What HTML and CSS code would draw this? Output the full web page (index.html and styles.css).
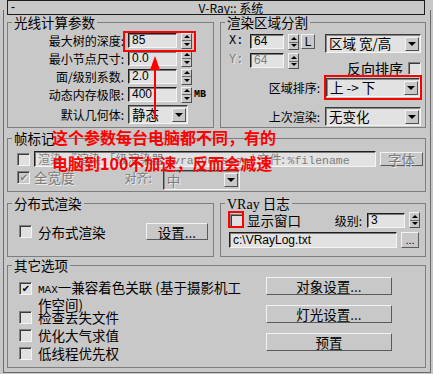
FILE: index.html
```html
<!DOCTYPE html>
<html lang="zh-CN">
<head>
    <meta charset="UTF-8">
    <meta name="viewport" content="width=device-width, initial-scale=1.0">
    <title>V-Ray:: 系统</title>
    <link rel="stylesheet" href="styles.css">
</head>
<body>
<div class="rollout">
    <div class="rollout-title">
        <span class="collapse">-</span>
        <span class="rollout-name">V-Ray:: 系统</span>
    </div>

    <div class="group-row top-row">
        <div class="group raycast">
            <div class="group-title">光线计算参数</div>
            <div class="param">
                <span class="param-label">最大树的深度:</span>
                <span class="field num">85</span>
                <span class="spin"><i class="up"></i><i class="down"></i></span>
            </div>
            <div class="param">
                <span class="param-label">最小节点尺寸:</span>
                <span class="field num">0.0</span>
                <span class="spin"><i class="up"></i><i class="down"></i></span>
            </div>
            <div class="param">
                <span class="param-label">面/级别系数.</span>
                <span class="field num">2.0</span>
                <span class="spin"><i class="up"></i><i class="down"></i></span>
            </div>
            <div class="param">
                <span class="param-label">动态内存极限:</span>
                <span class="field num">400</span>
                <span class="spin"><i class="up"></i><i class="down"></i></span>
                <span class="unit">MB</span>
            </div>
            <div class="param geom-row">
                <span class="param-label">默认几何体:</span>
                <span class="select geom">静态<span class="drop"></span></span>
            </div>
        </div>

        <div class="group regions">
            <div class="group-title">渲染区域分割</div>
            <div class="xy-row">
                <span class="axis">X:</span>
                <span class="field short">64</span>
                <span class="spin"><i class="up"></i><i class="down"></i></span>
                <span class="btn lock">L</span>
                <span class="select region-mode">区域 宽/高<span class="drop"></span></span>
            </div>
            <div class="xy-row">
                <span class="axis off">Y:</span>
                <span class="field short off">64</span>
                <span class="spin"><i class="up"></i><i class="down"></i></span>
                <label class="reverse">反向排序<span class="check"></span></label>
            </div>
            <div class="pick-row order-row">
                <span class="pick-label">区域排序:</span>
                <span class="select order">上 -&gt; 下<span class="drop"></span></span>
            </div>
            <div class="pick-row last-row">
                <span class="pick-label">上次渲染:</span>
                <span class="select last">无变化<span class="drop"></span></span>
            </div>
        </div>
    </div>

    <div class="group stamp">
        <div class="group-title">帧标记</div>
        <div class="stamp-row">
            <span class="check"></span>
            <span class="field stamp-text">渲染 『渲染 「级渲染器 <span class="mono">%vrayversion</span> | 文件: <span class="mono">%filename</span></span>
            <span class="btn off font-btn">字体</span>
        </div>
        <div class="stamp-row second">
            <span class="check checked off"></span>
            <span class="off wide-label">全宽度</span>
            <span class="off align-label">对齐:</span>
            <span class="select align off">中<span class="drop"></span></span>
        </div>
    </div>

    <div class="group-row mid-row">
        <div class="group distributed">
            <div class="group-title">分布式渲染</div>
            <div class="dist-row">
                <span class="check"></span>
                <span class="check-text">分布式渲染</span>
                <span class="btn setup">设置...</span>
            </div>
        </div>

        <div class="group log">
            <div class="group-title"><span class="serif">VRay</span> 日志</div>
            <div class="log-row">
                <span class="check"></span>
                <span class="check-text">显示窗口</span>
                <span class="level-label">级别:</span>
                <span class="field level">3</span>
                <span class="spin"><i class="up"></i><i class="down"></i></span>
            </div>
            <div class="log-row path-row">
                <span class="field path">c:\VRayLog.txt</span>
                <span class="btn browse">...</span>
            </div>
        </div>
    </div>

    <div class="group misc">
        <div class="group-title">其它选项</div>
        <div class="misc-options">
            <div class="option two-line">
                <span class="check checked"></span>
                <span class="check-text"><span class="mono max">MAX</span>一兼容着色关联 (基于摄影机工<br>作空间)</span>
            </div>
            <div class="option">
                <span class="check"></span>
                <span class="check-text">检查丢失文件</span>
            </div>
            <div class="option">
                <span class="check"></span>
                <span class="check-text">优化大气求值</span>
            </div>
            <div class="option">
                <span class="check"></span>
                <span class="check-text">低线程优先权</span>
            </div>
        </div>
        <div class="misc-buttons">
            <span class="btn wide">对象设置...</span>
            <span class="btn wide">灯光设置...</span>
            <span class="btn wide">预置</span>
        </div>
    </div>
</div>

<!-- red notes drawn over the dialog -->
<div class="mark mark-depth"></div>
<div class="mark mark-order"></div>
<div class="mark mark-log"></div>
<svg class="arrow" width="14" height="66" viewBox="0 0 14 66">
    <polygon points="7,1 12,15 2,15" fill="#ff0000"/>
    <rect x="6" y="14" width="2" height="50" fill="#ff0000"/>
</svg>
<div class="note note-one">这个参数每台电脑都不同，有的</div>
<div class="note note-two">电脑到100不加速，反而会减速</div>
</body>
</html>
```

FILE: styles.css
```css
* {
    box-sizing: border-box;
}
body {
    margin: 0;
    width: 433px;
    height: 374px;
    overflow: hidden;
    position: relative;
    background-color: #c8c8c8;
    font-family: "Noto Sans CJK SC", "Liberation Sans", sans-serif;
    font-size: 12px;
    color: #000;
}
.rollout {
    display: flow-root;
    margin: 10px 0 0 3px;
    width: 428px;
    height: 363px;
    border: 1px solid #6a6a6a;
    border-top: none;
    padding: 0 4px 0 3px;
}
.rollout-title {
    margin-top: -10px;
    width: 418px;
    height: 15px;
    border: 1px solid #1c1c1c;
    display: flex;
    align-items: center;
    overflow: hidden;
}
.collapse {
    width: 20px;
    padding-left: 3px;
    font-family: "Liberation Sans", sans-serif;
    font-size: 12px;
    line-height: 13px;
}
.rollout-name {
    flex: 1;
    text-align: center;
    padding-left: 10px;
    font-size: 12px;
    line-height: 13px;
}

/* group boxes */
.group {
    position: relative;
    border: 1px solid #7e7e7e;
}
.group-title {
    position: absolute;
    top: -8px;
    left: 4px;
    padding: 0 2px;
    background-color: #c8c8c8;
    font-size: 13.5px;
    line-height: 14px;
}
.group-row {
    display: flex;
    gap: 6px;
}
.top-row {
    margin-top: 7px;
}
.raycast {
    width: 207px;
    height: 106px;
    padding-top: 10px;
}
.regions {
    width: 206px;
    height: 106px;
    padding: 11px 4px 0 8px;
}

/* common controls */
.field {
    display: block;
    height: 15px;
    border: 1px solid;
    border-color: #1e1e1e #f4f4f4 #f4f4f4 #1e1e1e;
    box-shadow: inset 1px 1px 0 #7a7a7a;
    background-color: #e2e2e2;
    padding-left: 3px;
    font-family: "Liberation Sans", sans-serif;
    font-size: 12px;
    line-height: 13px;
    white-space: nowrap;
    overflow: hidden;
}
.spin {
    display: flex;
    flex-direction: column;
    width: 11px;
    height: 16px;
    border: 1px solid;
    border-color: #f2f2f2 #505050 #505050 #f2f2f2;
    background-color: #c8c8c8;
}
.spin i {
    flex: 1;
    display: flex;
    align-items: center;
    justify-content: center;
}
.spin .up {
    border-bottom: 1px solid #6a6a6a;
}
.spin .up::after {
    content: "";
    border-left: 3px solid transparent;
    border-right: 3px solid transparent;
    border-bottom: 3px solid #000;
}
.spin .down::after {
    content: "";
    border-left: 3px solid transparent;
    border-right: 3px solid transparent;
    border-top: 3px solid #000;
}
.select {
    display: flex;
    align-items: center;
    height: 19px;
    border: 1px solid;
    border-color: #3a3a3a #f4f4f4 #f4f4f4 #3a3a3a;
    box-shadow: inset 1px 1px 0 #8a8a8a;
    background-color: #e2e2e2;
    padding-left: 3px;
    font-size: 13.5px;
    line-height: 15px;
    white-space: nowrap;
}
.drop {
    margin-left: auto;
    margin-right: 1px;
    width: 14px;
    height: 14px;
    display: flex;
    align-items: center;
    justify-content: center;
    border: 1px solid;
    border-color: #f2f2f2 #505050 #505050 #f2f2f2;
    background-color: #c8c8c8;
}
.drop::after {
    content: "";
    border-left: 4px solid transparent;
    border-right: 4px solid transparent;
    border-top: 4px solid #000;
}
.btn {
    display: flex;
    align-items: center;
    justify-content: center;
    border: 1px solid;
    border-color: #f2f2f2 #5a5a5a #5a5a5a #f2f2f2;
    background-color: #c8c8c8;
    font-size: 13.5px;
    line-height: 14px;
    white-space: nowrap;
}
.check {
    display: flex;
    align-items: center;
    justify-content: center;
    flex: none;
    width: 13px;
    height: 13px;
    border: 1px solid;
    border-color: #808080 #f4f4f4 #f4f4f4 #808080;
    box-shadow: inset 1px 1px 0 #3a3a3a;
    background-color: #e0e0e0;
    font-family: "DejaVu Sans", sans-serif;
    font-size: 10px;
    line-height: 10px;
}
.check.checked::after {
    content: "✔";
    margin: 1px 0 0 1px;
}
.check.off {
    background-color: #c8c8c8;
    color: #808080;
}
.off {
    color: #7c7c7c;
    text-shadow: 1px 1px 0 #ececec;
}
.mono {
    font-family: "Liberation Mono", monospace;
    font-size: 11.5px;
}
.serif {
    font-family: "Liberation Serif", serif;
    font-size: 14px;
}

/* ray-cast params */
.param {
    display: flex;
    align-items: center;
    height: 15px;
    margin-bottom: 3px;
}
.param-label {
    width: 116px;
    margin-right: 4px;
    text-align: right;
    line-height: 15px;
    white-space: nowrap;
}
.num {
    width: 49px;
    margin-right: 4px;
}
.unit {
    margin-left: 2px;
    font-family: "Liberation Mono", monospace;
    font-size: 10px;
    font-weight: bold;
}
.geom-row {
    height: 19px;
    margin-top: 1px;
}
.geom {
    width: 60px;
}

/* render regions */
.xy-row {
    display: flex;
    align-items: flex-start;
}
.axis {
    width: 21px;
    font-family: "Liberation Mono", monospace;
    font-size: 12px;
    line-height: 15px;
}
.short {
    width: 34px;
    margin-right: 4px;
}
.lock {
    width: 14px;
    height: 15px;
    margin-left: 2px;
    font-family: "Liberation Sans", sans-serif;
    font-size: 12px;
}
.region-mode {
    width: 96px;
    margin-left: 10px;
}
.reverse {
    display: flex;
    align-items: center;
    gap: 5px;
    margin: 9px 0 0 auto;
    font-size: 14px;
    line-height: 13px;
}
.pick-row {
    display: flex;
    justify-content: flex-end;
    align-items: center;
}
.pick-label {
    font-size: 12px;
}
.order-row {
    margin-top: 3px;
}
.order {
    width: 94px;
    margin: 0 1px 0 6px;
}
.last-row {
    margin-top: 10px;
}
.last {
    width: 96px;
    margin-left: 5px;
}

/* frame stamp */
.stamp {
    margin-top: 10px;
    height: 54px;
    padding: 12px 1px 0 9px;
}
.stamp-row {
    display: flex;
    align-items: center;
}
.stamp-text {
    width: 342px;
    height: 16px;
    margin-left: 4px;
    color: #7c7c7c;
    font-family: "Noto Sans CJK SC", sans-serif;
    font-size: 12px;
}
.font-btn {
    width: 43px;
    height: 14px;
    margin-left: 4px;
}
.stamp-row.second {
    align-items: flex-start;
    margin-top: 3px;
}
.stamp-row.second .check {
    margin-top: 1px;
}
.wide-label {
    margin-left: 4px;
    font-size: 13.5px;
    line-height: 15px;
}
.align-label {
    margin-left: 50px;
    line-height: 15px;
}
.align {
    width: 77px;
    height: 20px;
    margin-left: 11px;
    background-color: #c8c8c8;
}

/* distributed + log */
.mid-row {
    margin-top: 11px;
}
.distributed {
    width: 207px;
    height: 54px;
    padding: 19px 5px 0 11px;
}
.dist-row {
    display: flex;
    align-items: center;
    height: 17px;
}
.check-text {
    margin-left: 6px;
    font-size: 13.5px;
    line-height: 14px;
    white-space: nowrap;
}
.setup {
    width: 62px;
    height: 17px;
    margin-left: auto;
}
.log {
    width: 206px;
    height: 54px;
    padding: 8px 5px 0 9px;
}
.log-row {
    display: flex;
    align-items: center;
    height: 16px;
}
.log-row .check-text {
    margin-left: 4px;
}
.level-label {
    margin-left: auto;
    margin-right: 5px;
    font-size: 12px;
}
.level {
    width: 38px;
    margin-right: 4px;
}
.path-row {
    margin-top: 4px;
}
.path {
    width: 168px;
    height: 16px;
    margin-left: -1px;
    line-height: 14px;
}
.browse {
    width: 18px;
    height: 16px;
    margin-left: 4px;
    font-family: "Liberation Sans", sans-serif;
    font-size: 11px;
}

/* other options */
.misc {
    margin-top: 8px;
    height: 103px;
    display: flex;
}
.misc-options {
    flex: 1;
    padding: 14px 0 0 11px;
}
.option {
    display: flex;
    align-items: flex-start;
    margin-bottom: 4px;
    line-height: 14px;
}
.option .check {
    margin-top: 1px;
}
.option.two-line {
    line-height: 12px;
    margin-bottom: -1px;
}
.option.two-line .check {
    margin-top: 2px;
}
.max {
    font-size: 11px;
}
.misc-buttons {
    width: 126px;
    margin-right: 33px;
    padding-top: 11px;
    display: flex;
    flex-direction: column;
    gap: 10px;
}
.wide {
    height: 18px;
}

/* red annotations */
.mark {
    position: absolute;
    border: 2px solid #ff0000;
}
.mark-depth {
    left: 123px;
    top: 31px;
    width: 73px;
    height: 21px;
}
.mark-order {
    left: 324px;
    top: 75px;
    width: 98px;
    height: 25px;
}
.mark-log {
    left: 228px;
    top: 211px;
    width: 16px;
    height: 17px;
}
.arrow {
    position: absolute;
    left: 148px;
    top: 55px;
}
.note {
    position: absolute;
    left: 52px;
    color: #ff0000;
    font-size: 16px;
    font-weight: bold;
    line-height: 26px;
    white-space: nowrap;
}
.note-one {
    top: 124px;
}
.note-two {
    top: 150px;
}
```
